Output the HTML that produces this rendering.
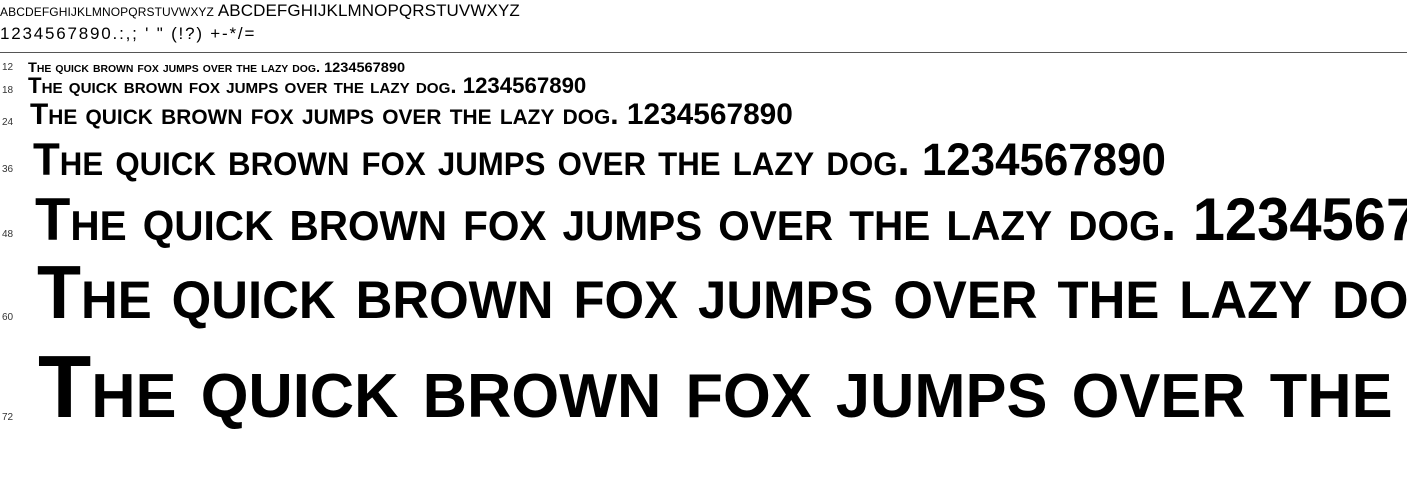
<!DOCTYPE html>
<html><head><meta charset="utf-8"><style>
body{margin:0;width:1407px;height:485px;background:#fff;position:relative;overflow:hidden;font-family:"Liberation Sans",sans-serif;color:#000}
.t{position:absolute;white-space:nowrap;line-height:1;font-weight:bold;font-variant:small-caps;transform-origin:0 0}
.h{position:absolute;white-space:nowrap;line-height:1;transform-origin:0 0;font-size:17px}
.l{position:absolute;left:2px;font-size:10px;color:#333;line-height:1}
.hr{position:absolute;left:0;top:52px;width:1407px;height:1px;background:#555}
</style></head><body>
<div class="h" style="left:0;top:2px;letter-spacing:0.1px"><span style="font-variant:small-caps">abcdefghijklmnopqrstuvwxyz</span> ABCDEFGHIJKLMNOPQRSTUVWXYZ</div>
<div class="h" style="left:0;top:25px;letter-spacing:1.8px">1234567890.:,; ' " (!?) +-*/=</div>
<div class="hr"></div>
<div class="l" style="top:63px">12</div>
<div class="t" style="left:28px;top:60px;font-size:14px;transform:scaleX(1.04)">The quick brown fox jumps over the lazy dog. 1234567890</div>
<div class="l" style="top:86px">18</div>
<div class="t" style="left:28px;top:75px;font-size:22px;transform:scaleX(1.01)">The quick brown fox jumps over the lazy dog. 1234567890</div>
<div class="l" style="top:118px">24</div>
<div class="t" style="left:30px;top:100px;font-size:30px;transform:scaleX(0.995)">The quick brown fox jumps over the lazy dog. 1234567890</div>
<div class="l" style="top:165px">36</div>
<div class="t" style="left:33px;top:137px;font-size:45px;transform:scaleX(0.975)">The quick brown fox jumps over the lazy dog. 1234567890</div>
<div class="l" style="top:230px">48</div>
<div class="t" style="left:35px;top:190px;font-size:60px;transform:scaleX(0.965)">The quick brown fox jumps over the lazy dog. 1234567890</div>
<div class="l" style="top:313px">60</div>
<div class="t" style="left:37px;top:255px;font-size:75px;transform:scaleX(0.96)">The quick brown fox jumps over the lazy dog. 1234567890</div>
<div class="l" style="top:413px">72</div>
<div class="t" style="left:38px;top:343px;font-size:88px;transform:scaleX(0.99)">The quick brown fox jumps over the lazy dog. 1234567890</div>
</body></html>
